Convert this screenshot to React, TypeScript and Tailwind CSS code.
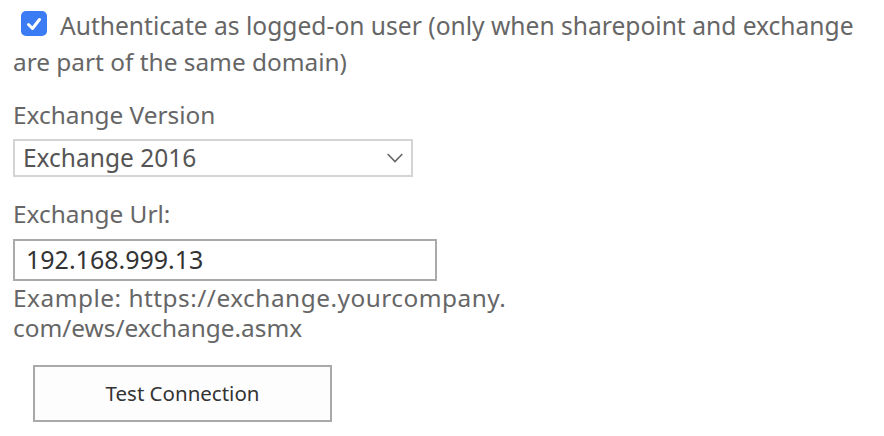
import React from 'react';

const font = { fontFamily: '"Noto Sans", "Open Sans", sans-serif' };

export default function App() {
  return (
    <div className="w-[884px] h-[436px] bg-white pl-[13px] pt-[10px] text-[#666666] text-[24.4px]" style={font}>
      <div className="flex items-start leading-[32px] pl-[8px]">
        <span className="mt-[1px] flex items-center justify-center w-[26px] h-[25px] rounded-[5px] bg-[#3b7cf5] shrink-0">
          <svg width="18" height="18" viewBox="0 0 18 18" fill="none">
            <path d="M3.5 9.5 L7.5 13.5 L14.5 4.5" stroke="white" strokeWidth="3" strokeLinecap="round" strokeLinejoin="round" />
          </svg>
        </span>
        <span className="ml-[13px] whitespace-nowrap text-[24.6px]">Authenticate as logged-on user (only when sharepoint and exchange</span>
      </div>
      <div className="mt-[4px] leading-[32px]">are part of the same domain)</div>

      <div className="mt-[21px] leading-[32px]">Exchange Version</div>
      <div className="mt-[8px] w-[400px] h-[38px] border-2 border-[#d4d4d4] flex items-center justify-between pl-[8px] pr-[8px] text-[24.5px] text-[#555555]">
        <span>Exchange 2016</span>
        <svg width="16" height="10" viewBox="0 0 16 10" fill="none">
          <path d="M0.7 1 L8 8.5 L15.3 1" stroke="#666666" strokeWidth="1.6" />
        </svg>
      </div>

      <div className="mt-[21px] leading-[32px]">Exchange Url:</div>
      <div className="mt-[9px] w-[424px] h-[42px] border-2 border-[#aaaaaa] flex items-center pl-[11px] text-[25px] text-[#333333]">
        192.168.999.13
      </div>
      <div className="mt-[2px] leading-[30px]">
        <div className="tracking-[0.5px]">Example: https://exchange.yourcompany.</div>
        <div>com/ews/exchange.asmx</div>
      </div>

      <button className="mt-[22px] ml-[20px] w-[299px] h-[57px] border-2 border-[#a9a9a9] bg-[#fdfdfd] text-[20.5px] text-[#333333]" style={font}>
        Test Connection
      </button>
    </div>
  );
}
